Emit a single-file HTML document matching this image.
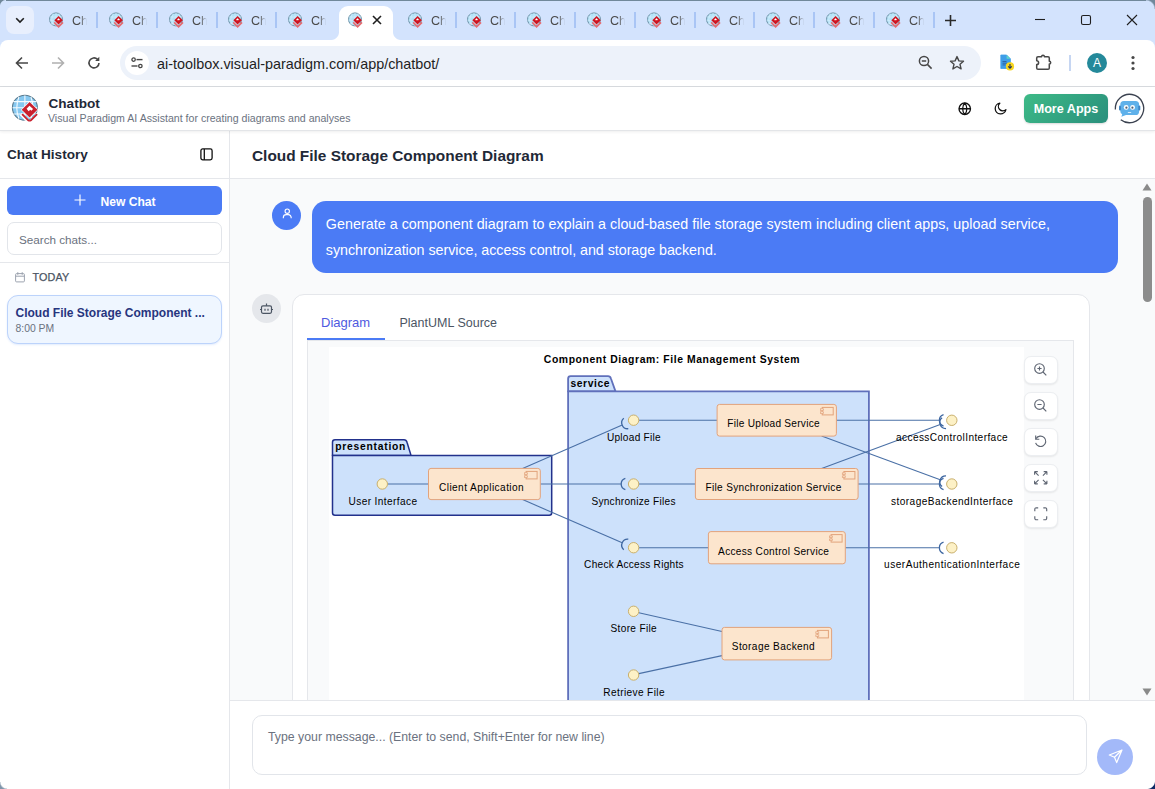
<!DOCTYPE html>
<html><head><meta charset="utf-8">
<style>
*{box-sizing:border-box;margin:0;padding:0}
html,body{width:1155px;height:789px;overflow:hidden;background:#fff;font-family:"Liberation Sans",sans-serif}
.a{position:absolute}
svg{display:block;position:absolute;overflow:visible}
.tabt{position:absolute;top:14.5px;font-size:12.6px;color:#4a4a4a;white-space:nowrap;line-height:1}
.sep{position:absolute;top:12px;width:2px;height:16px;background:#a9c5f5}
.t{position:absolute;white-space:nowrap;line-height:1}
</style></head><body>
<svg width="0" height="0" style="position:absolute">
 <defs>
  <symbol id="vp" viewBox="11.3 93.6 27.6 27.6">
   <circle cx="25.2" cy="107.4" r="12.5" fill="#86c8f0" stroke="#5b7b8e" stroke-width="1.1"/>
   <path d="M13.5 101.2h23.4M12.8 107.4h24.8M13.5 113.6h23.4M25.2 95v25M19.2 96.5q-4.2 10.9 0 21.8M31.2 96.5q4.2 10.9 0 21.8" stroke="#f4fbff" stroke-width="1.1" fill="none"/>
   <path d="M21.2 113.6L30 122.2 38.6 113.6" fill="none" stroke="#fff" stroke-width="3.4"/>
   <path d="M29.9 100.6L38.6 109.3 29.9 118 21.2 109.3z" fill="#fff"/>
   <path d="M29.9 101.6L37.8 109.4 29.9 117.2 22 109.4z" fill="#c9202e"/>
   <path d="M22.4 113.8L29.9 121.2 37.4 113.8" fill="none" stroke="#c9202e" stroke-width="1.9"/>
   <path d="M26.9 108.3L29.8 105.3 33.4 108.7 31.7 110.4 30.6 109.3 28.9 110.9z" fill="#fff"/>
  </symbol>
<symbol id="vpf" viewBox="0 0 16 16">
   <circle cx="8" cy="7.4" r="6.5" fill="#b3e1f7" stroke="#6f93a8" stroke-width="1"/>
   <path d="M2 5h12M1.6 8.4h12.8M3 11.6h10M8 1v13M5 1.8q-2.6 5.6 0 11.2M11 1.8q2.6 5.6 0 11.2" stroke="#d6f0fb" stroke-width="0.6" fill="none"/>
   <path d="M6.2 10.4L10.6 14.8 15 10.4" fill="none" stroke="#e66a70" stroke-width="1.6"/>
   <path d="M10.6 3.9L14.9 8.2 10.6 12.5 6.3 8.2z" fill="#cf1520"/>
   <path d="M9.2 7.6L10.5 6.2 11.9 7.6 11 8.5 10.4 8 9.8 8.6z" fill="#fff"/>
  </symbol>
 </defs>
</svg>
<!-- tab strip -->
<div class="a" style="left:0;top:0;width:1155px;height:50px;background:#d3e3fd"></div>
<div class="a" style="left:0;top:0;width:1155px;height:1px;background:#70889a"></div>
<div class="a" style="left:0;top:0;width:6px;height:6px;background:radial-gradient(circle at 6px 6px,#d3e3fd 5.5px,#70889a 6.5px)"></div>
<div class="a" style="left:1146px;top:0;width:9px;height:9px;background:radial-gradient(circle at 0px 9px,#d3e3fd 8px,#70889a 9.5px)"></div>
<div class="a" style="left:6px;top:6px;width:28px;height:28px;border-radius:8px;background:#e8effd"></div>
<svg style="left:14px;top:13.6px" width="12" height="12" viewBox="0 0 12 12"><path d="M2.2 4.2L6 8l3.8-3.8" fill="none" stroke="#1f1f1f" stroke-width="1.6"/></svg>
<svg style="left:48.0px;top:12px" width="16" height="16"><use href="#vpf"/></svg>
<div class="tabt" style="left:72px;width:15px;overflow:hidden;-webkit-mask-image:linear-gradient(90deg,#000 55%,transparent 100%);mask-image:linear-gradient(90deg,#000 55%,transparent 100%)">Chat</div>
<div class="sep" style="left:96px"></div>
<svg style="left:108.0px;top:12px" width="16" height="16"><use href="#vpf"/></svg>
<div class="tabt" style="left:132px;width:15px;overflow:hidden;-webkit-mask-image:linear-gradient(90deg,#000 55%,transparent 100%);mask-image:linear-gradient(90deg,#000 55%,transparent 100%)">Chat</div>
<div class="sep" style="left:156px"></div>
<svg style="left:168.0px;top:12px" width="16" height="16"><use href="#vpf"/></svg>
<div class="tabt" style="left:192px;width:15px;overflow:hidden;-webkit-mask-image:linear-gradient(90deg,#000 55%,transparent 100%);mask-image:linear-gradient(90deg,#000 55%,transparent 100%)">Chat</div>
<div class="sep" style="left:216px"></div>
<svg style="left:227.0px;top:12px" width="16" height="16"><use href="#vpf"/></svg>
<div class="tabt" style="left:251px;width:15px;overflow:hidden;-webkit-mask-image:linear-gradient(90deg,#000 55%,transparent 100%);mask-image:linear-gradient(90deg,#000 55%,transparent 100%)">Chat</div>
<div class="sep" style="left:275px"></div>
<svg style="left:287.0px;top:12px" width="16" height="16"><use href="#vpf"/></svg>
<div class="tabt" style="left:311px;width:15px;overflow:hidden;-webkit-mask-image:linear-gradient(90deg,#000 55%,transparent 100%);mask-image:linear-gradient(90deg,#000 55%,transparent 100%)">Chat</div>
<div class="a" style="left:339px;top:6px;width:54px;height:35px;background:#fff;border-radius:9px 9px 0 0"></div>
<div class="a" style="left:331px;top:32px;width:8px;height:8px;background:radial-gradient(circle at 0 0,#d3e3fd 7.5px,#fff 8.5px)"></div>
<div class="a" style="left:393px;top:32px;width:8px;height:8px;background:radial-gradient(circle at 8px 0,#d3e3fd 7.5px,#fff 8.5px)"></div>
<svg style="left:347.0px;top:12px" width="16" height="16"><use href="#vpf"/></svg>
<svg style="left:372px;top:15px" width="10" height="10" viewBox="0 0 10 10"><path d="M1 1L9 9M9 1L1 9" stroke="#1f1f1f" stroke-width="1.6"/></svg>
<svg style="left:407.0px;top:12px" width="16" height="16"><use href="#vpf"/></svg>
<div class="tabt" style="left:431px;width:15px;overflow:hidden;-webkit-mask-image:linear-gradient(90deg,#000 55%,transparent 100%);mask-image:linear-gradient(90deg,#000 55%,transparent 100%)">Chat</div>
<div class="sep" style="left:455px"></div>
<svg style="left:466.0px;top:12px" width="16" height="16"><use href="#vpf"/></svg>
<div class="tabt" style="left:490px;width:15px;overflow:hidden;-webkit-mask-image:linear-gradient(90deg,#000 55%,transparent 100%);mask-image:linear-gradient(90deg,#000 55%,transparent 100%)">Chat</div>
<div class="sep" style="left:514px"></div>
<svg style="left:526.0px;top:12px" width="16" height="16"><use href="#vpf"/></svg>
<div class="tabt" style="left:550px;width:15px;overflow:hidden;-webkit-mask-image:linear-gradient(90deg,#000 55%,transparent 100%);mask-image:linear-gradient(90deg,#000 55%,transparent 100%)">Chat</div>
<div class="sep" style="left:574px"></div>
<svg style="left:586.0px;top:12px" width="16" height="16"><use href="#vpf"/></svg>
<div class="tabt" style="left:610px;width:15px;overflow:hidden;-webkit-mask-image:linear-gradient(90deg,#000 55%,transparent 100%);mask-image:linear-gradient(90deg,#000 55%,transparent 100%)">Chat</div>
<div class="sep" style="left:634px"></div>
<svg style="left:646.0px;top:12px" width="16" height="16"><use href="#vpf"/></svg>
<div class="tabt" style="left:670px;width:15px;overflow:hidden;-webkit-mask-image:linear-gradient(90deg,#000 55%,transparent 100%);mask-image:linear-gradient(90deg,#000 55%,transparent 100%)">Chat</div>
<div class="sep" style="left:694px"></div>
<svg style="left:705.0px;top:12px" width="16" height="16"><use href="#vpf"/></svg>
<div class="tabt" style="left:729px;width:15px;overflow:hidden;-webkit-mask-image:linear-gradient(90deg,#000 55%,transparent 100%);mask-image:linear-gradient(90deg,#000 55%,transparent 100%)">Chat</div>
<div class="sep" style="left:753px"></div>
<svg style="left:765.0px;top:12px" width="16" height="16"><use href="#vpf"/></svg>
<div class="tabt" style="left:789px;width:15px;overflow:hidden;-webkit-mask-image:linear-gradient(90deg,#000 55%,transparent 100%);mask-image:linear-gradient(90deg,#000 55%,transparent 100%)">Chat</div>
<div class="sep" style="left:813px"></div>
<svg style="left:825.0px;top:12px" width="16" height="16"><use href="#vpf"/></svg>
<div class="tabt" style="left:849px;width:15px;overflow:hidden;-webkit-mask-image:linear-gradient(90deg,#000 55%,transparent 100%);mask-image:linear-gradient(90deg,#000 55%,transparent 100%)">Chat</div>
<div class="sep" style="left:873px"></div>
<svg style="left:885.0px;top:12px" width="16" height="16"><use href="#vpf"/></svg>
<div class="tabt" style="left:909px;width:15px;overflow:hidden;-webkit-mask-image:linear-gradient(90deg,#000 55%,transparent 100%);mask-image:linear-gradient(90deg,#000 55%,transparent 100%)">Chat</div>
<div class="sep" style="left:933px"></div>

<svg style="left:944.5px;top:14.5px" width="11" height="11" viewBox="0 0 11 11"><path d="M5.5 0v11M0 5.5h11" stroke="#2a2a2a" stroke-width="1.6"/></svg>



<svg style="left:1020px;top:0" width="135" height="40" viewBox="1020 0 135 40"><path d="M1035 19.5h10" stroke="#1f1f1f" stroke-width="1.1"/><rect x="1081.5" y="15.5" width="9" height="9" rx="1.6" fill="none" stroke="#1f1f1f" stroke-width="1.1"/><path d="M1127 15L1137 25M1137 15L1127 25" stroke="#1f1f1f" stroke-width="1.1"/></svg>
<!-- toolbar -->
<div class="a" style="left:0;top:40px;width:1155px;height:46px;background:#fff;border-radius:8px 8px 0 0"></div>
<div class="a" style="left:0;top:86px;width:1155px;height:1px;background:#d9dce0"></div>
<svg style="left:15px;top:56px" width="14" height="14" viewBox="0 0 14 14"><path d="M13 7H2M7 1.5L1.5 7 7 12.5" fill="none" stroke="#474747" stroke-width="1.6"/></svg>
<svg style="left:51px;top:56px" width="14" height="14" viewBox="0 0 14 14"><path d="M1 7h11M7 1.5L12.5 7 7 12.5" fill="none" stroke="#b0b0b0" stroke-width="1.6"/></svg>
<svg style="left:87px;top:56px" width="14" height="14" viewBox="0 0 14 14"><path d="M12 7A5 5 0 1 1 10.5 3.3" fill="none" stroke="#474747" stroke-width="1.6"/><path d="M12.3 0.8v4.2H8.1z" fill="#474747"/></svg>
<div class="a" style="left:120px;top:46px;width:861px;height:34px;border-radius:17px;background:#edf2fa"></div>
<div class="a" style="left:125px;top:51px;width:24px;height:24px;border-radius:12px;background:#fff"></div>
<svg style="left:131px;top:57px" width="12" height="12" viewBox="0 0 12 12"><circle cx="2.6" cy="2.6" r="1.7" fill="none" stroke="#474747" stroke-width="1.3"/><path d="M5.5 2.6h6" stroke="#474747" stroke-width="1.4"/><circle cx="9.4" cy="9" r="1.7" fill="none" stroke="#474747" stroke-width="1.3"/><path d="M0.5 9h6" stroke="#474747" stroke-width="1.4"/></svg>
<div class="t" style="left:157px;top:57px;font-size:14.4px;color:#1f1f1f">ai-toolbox.visual-paradigm.com/app/chatbot/</div>
<svg style="left:917.5px;top:55px" width="15" height="15" viewBox="0 0 15 15"><circle cx="6" cy="6" r="4.6" fill="none" stroke="#474747" stroke-width="1.5"/><path d="M3.8 6h4.4M9.4 9.4l4.2 4.2" stroke="#474747" stroke-width="1.5"/></svg>
<svg style="left:949px;top:55px" width="16" height="16" viewBox="0 0 16 16"><path d="M8 1.6l1.9 4.3 4.6.4-3.5 3 1.1 4.6L8 11.5l-4.1 2.4 1.1-4.6-3.5-3 4.6-.4z" fill="none" stroke="#474747" stroke-width="1.4" stroke-linejoin="round"/></svg>
<svg style="left:998px;top:53px" width="18" height="18" viewBox="0 0 18 18"><path d="M2.8 2h5.8l3.8 3.8V15.5H2.8z" fill="#3f9ee8" stroke="#3f9ee8" stroke-width="0.8" stroke-linejoin="round"/><path d="M8.6 2v3.8h3.8z" fill="#5fd6c9"/><path d="M4.5 8.5h4M4.5 10.2h4.5M4.5 11.9h3" stroke="#2b5f9e" stroke-width="0.9"/><circle cx="12" cy="13.4" r="4.1" fill="#f7d51d"/><path d="M12 10.9v4.4M10.2 13.4l1.8 1.9 1.8-1.9" fill="none" stroke="#1d2e5a" stroke-width="1.1"/></svg>
<svg style="left:1035px;top:53px" width="17" height="17" viewBox="0 0 17 17"><path d="M3 3.7H6.6A1.4 1.4 0 0 1 9.4 3.7H13Q14.3 3.7 14.3 5V8.3A1.4 1.4 0 0 1 14.3 11.1V14.9Q14.3 16.2 13 16.2H3Q1.7 16.2 1.7 14.9V11.6A1.9 1.9 0 0 0 1.7 7.8V5Q1.7 3.7 3 3.7Z" fill="none" stroke="#474747" stroke-width="1.5" stroke-linejoin="round"/></svg>
<div class="a" style="left:1069px;top:55px;width:2px;height:16px;background:#c6d6f2"></div>
<div class="a" style="left:1087px;top:53px;width:20px;height:20px;border-radius:10px;background:#24899a"></div>
<div class="t" style="left:1087px;top:57px;width:20px;text-align:center;font-size:12px;color:#fff">A</div>
<svg style="left:1130px;top:55px" width="6" height="16" viewBox="0 0 6 16"><circle cx="3" cy="2.5" r="1.6" fill="#474747"/><circle cx="3" cy="8" r="1.6" fill="#474747"/><circle cx="3" cy="13.5" r="1.6" fill="#474747"/></svg>
<!-- app header -->
<div class="a" style="left:0;top:87px;width:1155px;height:44px;background:#fff;border-bottom:1px solid #e3e5e8;box-shadow:0 1px 3px rgba(0,0,0,0.07);z-index:2"></div>
<div class="a" style="left:0;top:87px;width:1155px;height:44px;z-index:3">
 <svg style="left:11.3px;top:6.6px" width="27.6" height="27.6"><use href="#vp"/></svg>
 <div class="t" style="left:48.5px;top:10px;font-size:13.6px;font-weight:700;color:#1f2937">Chatbot</div>
 <div class="t" style="left:48px;top:26px;font-size:10.6px;color:#6b7280">Visual Paradigm AI Assistant for creating diagrams and analyses</div>
 <svg style="left:957.5px;top:14.5px" width="13.5" height="13.5" viewBox="0 0 16 16"><circle cx="8" cy="8" r="6.8" fill="none" stroke="#111" stroke-width="1.6"/><path d="M1.2 8h13.6M8 1.2c-3.3 3.7-3.3 9.9 0 13.6M8 1.2c3.3 3.7 3.3 9.9 0 13.6" fill="none" stroke="#111" stroke-width="1.5"/></svg>
 <svg style="left:993.5px;top:15px" width="13" height="13" viewBox="0 0 13 13"><path d="M5.8 1.2A5.4 5.4 0 1 0 11.9 7.6 4.1 4.1 0 0 1 5.8 1.2z" fill="none" stroke="#111" stroke-width="1.3" stroke-linejoin="round"/></svg>
 <div class="a" style="left:1024px;top:7px;width:84px;height:29px;border-radius:6px;background:linear-gradient(135deg,#3dba87,#2a8f7c);box-shadow:0 1px 2px rgba(0,0,0,0.15)"></div>
 <div class="t" style="left:1024px;top:16px;width:84px;text-align:center;font-size:12.6px;font-weight:700;color:#fff">More Apps</div>
 <svg style="left:0;top:-87px" width="1155" height="130" viewBox="0 0 1155 130"><path d="M1115.33 109.49A14.2 14.2 0 1 1 1120.76 119.69" fill="none" stroke="#3b4250" stroke-width="1.3"/><path d="M1124 101h11.5a3.6 3.6 0 0 1 3.6 3.6v6.8a3.6 3.6 0 0 1-3.6 3.6h-9.5l-4.6 1.8 0.8-2.6a3.6 3.6 0 0 1-1.9-3.2v-6.4a3.6 3.6 0 0 1 3.7-3.6z" fill="#5fb1ea"/><rect x="1119" y="105.5" width="2" height="5" rx="1" fill="#3f86c4"/><rect x="1138.3" y="105.5" width="2" height="5" rx="1" fill="#3f86c4"/><circle cx="1126.2" cy="107.4" r="2.4" fill="#fff"/><circle cx="1132.6" cy="107.4" r="2.4" fill="#fff"/><circle cx="1126.4" cy="107.7" r="1.1" fill="#4f5f73"/><circle cx="1132.4" cy="107.7" r="1.1" fill="#4f5f73"/><path d="M1128.3 112.5h2.4" stroke="#d8efff" stroke-width="1.1" stroke-linecap="round"/></svg>
</div>
<!-- sidebar -->
<div class="a" style="left:0;top:131px;width:230px;height:658px;background:#fff;border-right:1px solid #e5e7eb"></div>
<div class="t" style="left:7px;top:148px;font-size:13.6px;font-weight:700;color:#1f2937">Chat History</div>
<svg style="left:200px;top:148px" width="13" height="13" viewBox="0 0 13 13"><rect x="0.9" y="0.9" width="11.2" height="11" rx="1.8" fill="none" stroke="#111" stroke-width="1.3"/><path d="M4.3 0.9v11" stroke="#111" stroke-width="1.3"/></svg>
<div class="a" style="left:0;top:178px;width:229px;height:1px;background:#e5e7eb"></div>
<div class="a" style="left:7px;top:186px;width:215px;height:29px;border-radius:6px;background:#4b7bf5"></div>
<svg style="left:74px;top:194px" width="12" height="12" viewBox="0 0 12 12"><path d="M6 0.5v11M0.5 6h11" stroke="#fff" stroke-width="1.15"/></svg>
<div class="t" style="left:100.5px;top:196px;font-size:12.1px;font-weight:700;color:#fff">New Chat</div>
<div class="a" style="left:7px;top:222px;width:215px;height:33px;border-radius:7px;background:#fff;border:1px solid #e2e5ea"></div>
<div class="t" style="left:19px;top:233.5px;font-size:11.7px;color:#6b7280">Search chats...</div>
<div class="a" style="left:0;top:262px;width:229px;height:1px;background:#e5e7eb"></div>
<svg style="left:14.5px;top:271.8px" width="10" height="10.5" viewBox="0 0 10 10.5"><rect x="0.6" y="1.6" width="8.8" height="8.3" rx="1" fill="none" stroke="#9ca3af" stroke-width="1"/><path d="M0.6 4.2h8.8M2.8 0.2v2.6M7.2 0.2v2.6" stroke="#9ca3af" stroke-width="1"/></svg>
<div class="t" style="left:32.5px;top:272px;font-size:10.8px;font-weight:400;color:#4b5563;letter-spacing:0.15px;-webkit-text-stroke:0.25px #4b5563">TODAY</div>
<div class="a" style="left:7px;top:295px;width:215px;height:49px;border-radius:11px;background:#eff6ff;border:1px solid #bcd3fb;box-shadow:0 1px 2px rgba(59,130,246,0.15)"></div>
<div class="t" style="left:15.5px;top:307px;font-size:12px;font-weight:700;color:#27357e">Cloud File Storage Component ...</div>
<div class="t" style="left:15.5px;top:324.3px;font-size:10.4px;color:#6b7280">8:00 PM</div>
<!-- main -->
<div class="a" style="left:230px;top:131px;width:925px;height:48px;background:#fff;border-bottom:1px solid #e5e7eb"></div>
<div class="t" style="left:252px;top:148px;font-size:15.4px;font-weight:700;color:#1f2937">Cloud File Storage Component Diagram</div>
<div class="a" style="left:230px;top:179px;width:925px;height:521px;background:#f9fafb;overflow:hidden" id="msgs">
</div>
<!-- user message -->
<div class="a" style="left:272px;top:201px;width:29px;height:29px;border-radius:50%;background:#4b7bf5"></div>
<svg style="left:280.8px;top:207.2px" width="12.5" height="12.5" viewBox="0 0 15 15"><circle cx="7.5" cy="5" r="2.6" fill="none" stroke="#fff" stroke-width="1.35"/><path d="M2.8 13.5v-0.8a3.5 3.5 0 0 1 3.5-3.5h2.4a3.5 3.5 0 0 1 3.5 3.5v0.8" fill="none" stroke="#fff" stroke-width="1.35"/></svg>
<div class="a" style="left:312px;top:201px;width:806px;height:72px;border-radius:14px;background:#4b7bf5"></div>
<div class="a" style="left:325.8px;top:211.2px;font-size:14.3px;line-height:26px;color:#fff;white-space:nowrap;letter-spacing:0.03px">Generate a component diagram to explain a cloud-based file storage system including client apps, upload service,</div><div class="a" style="left:325.8px;top:237.2px;font-size:14.3px;line-height:26px;color:#fff;white-space:nowrap;letter-spacing:-0.04px">synchronization service, access control, and storage backend.</div>
<!-- bot -->
<div class="a" style="left:252px;top:294px;width:29px;height:29px;border-radius:50%;background:#e5e7eb"></div>
<svg style="left:259px;top:301px" width="15" height="15" viewBox="0 0 15 15"><rect x="2.5" y="4.8" width="10" height="7.5" rx="1.5" fill="none" stroke="#4b5563" stroke-width="1.2"/><path d="M7.5 4.8V2.5M1 8.5h1.5M12.5 8.5H14M6 7.8v2M9 7.8v2" stroke="#4b5563" stroke-width="1.2"/></svg>
<div class="a" style="left:292px;top:294px;width:798px;height:500px;border-radius:12px;background:#fff;border:1px solid #e5e7eb"></div>
<div class="t" style="left:321px;top:316.3px;font-size:13px;color:#4f5ae0">Diagram</div>
<div class="t" style="left:399.5px;top:316.8px;font-size:12.5px;color:#4b5563">PlantUML Source</div>
<div class="a" style="left:307px;top:338px;width:78px;height:2px;background:#4b7bf5"></div>
<div class="a" style="left:307px;top:340px;width:767px;height:400px;background:#f9fafb;border:1px solid #e5e7eb"></div>
<div class="a" style="left:329px;top:347px;width:695px;height:400px;background:#fff"></div>
<svg style="left:329px;top:347px" width="695" height="353" viewBox="329 347 695 353"><style>.lb{font-family:"Liberation Sans",sans-serif;font-size:10.1px;fill:#000}.pk{font-family:"Liberation Sans",sans-serif;font-size:10.3px;font-weight:700;fill:#000}.tt{font-family:"Liberation Sans",sans-serif;font-size:10.4px;font-weight:700;fill:#000}</style><text x="543.8" y="362.9" textLength="255.8" class="tt">Component Diagram: File Management System</text><path d="M568.1 391.4V378.7Q568.1 376.2 570.6 376.2H608.0Q610.3 376.2 611.0 378.7L615.5 391.4H568.1z" fill="#cde1fb" stroke="#6070bb" stroke-width="1.8" stroke-linejoin="round"/><path d="M568.1 391.4H868.9V757.5Q868.9 760 866.4 760H570.6Q568.1 760 568.1 757.5z" fill="#cde1fb" stroke="#6070bb" stroke-width="1.8"/><text x="570.5" y="386.8" textLength="39.0" class="pk">service</text><path d="M332.5 455.4V442.3Q332.5 439.8 335.0 439.8H404.0Q406.3 439.8 407.0 442.3L411 455.4H332.5z" fill="#cde1fb" stroke="#22318c" stroke-width="1.5" stroke-linejoin="round"/><path d="M332.5 455.4H551.7V512.7Q551.7 515.2 549.2 515.2H335.0Q332.5 515.2 332.5 512.7z" fill="#cde1fb" stroke="#22318c" stroke-width="1.5"/><text x="335.20000000000005" y="450.2" textLength="70.2" class="pk">presentation</text><path d="M388.0 484.0L428.5 484.0" stroke="#4a70a6" stroke-width="1.1" fill="none"/><path d="M628.30 428.72A6 6 0 0 1 623.76 418.25" stroke="#3d66a0" stroke-width="1.3" fill="none"/><path d="M522.6 468.4L622.2 425.1" stroke="#4a70a6" stroke-width="1.1" fill="none"/><path d="M625.35 489.71A6 6 0 0 1 625.35 478.29" stroke="#3d66a0" stroke-width="1.3" fill="none"/><path d="M540.3 484.0L621.2 484.0" stroke="#4a70a6" stroke-width="1.1" fill="none"/><path d="M623.76 549.65A6 6 0 0 1 628.30 539.18" stroke="#3d66a0" stroke-width="1.3" fill="none"/><path d="M522.6 499.6L622.2 542.8" stroke="#4a70a6" stroke-width="1.1" fill="none"/><path d="M639.0 420.2L717.1 420.2" stroke="#4a70a6" stroke-width="1.1" fill="none"/><path d="M639.0 484.0L695.4 484.0" stroke="#4a70a6" stroke-width="1.1" fill="none"/><path d="M639.0 547.7L708.4 547.7" stroke="#4a70a6" stroke-width="1.1" fill="none"/><path d="M638.8 612.8L722.0 631.5" stroke="#4a70a6" stroke-width="1.1" fill="none"/><path d="M638.8 673.6L722.0 655.6" stroke="#4a70a6" stroke-width="1.1" fill="none"/><path d="M943.55 426.01A6 6 0 0 1 943.55 414.59" stroke="#3d66a0" stroke-width="1.3" fill="none"/><path d="M836.4 420.3L939.4 420.3" stroke="#4a70a6" stroke-width="1.1" fill="none"/><path d="M946.04 428.52A6 6 0 0 1 942.08 417.81" stroke="#3d66a0" stroke-width="1.3" fill="none"/><path d="M821.6 468.5L940.2 424.6" stroke="#4a70a6" stroke-width="1.1" fill="none"/><path d="M942.08 486.51A6 6 0 0 1 946.02 475.79" stroke="#3d66a0" stroke-width="1.3" fill="none"/><path d="M821.6 436.1L940.2 479.7" stroke="#4a70a6" stroke-width="1.1" fill="none"/><path d="M943.55 489.71A6 6 0 0 1 943.55 478.29" stroke="#3d66a0" stroke-width="1.3" fill="none"/><path d="M858.1 484.0L939.4 484.0" stroke="#4a70a6" stroke-width="1.1" fill="none"/><path d="M943.55 553.51A6 6 0 0 1 943.55 542.09" stroke="#3d66a0" stroke-width="1.3" fill="none"/><path d="M845.3 547.8L939.4 547.8" stroke="#4a70a6" stroke-width="1.1" fill="none"/><circle cx="382.3" cy="484" r="5.2" fill="#fdf1c6" stroke="#c9b06e" stroke-width="1"/><text x="348.5" y="505.2" textLength="68.6" class="lb">User Interface</text><circle cx="633.6" cy="420.2" r="5.2" fill="#fdf1c6" stroke="#c9b06e" stroke-width="1"/><text x="606.9" y="441.2" textLength="53.8" class="lb">Upload File</text><circle cx="633.6" cy="484" r="5.2" fill="#fdf1c6" stroke="#c9b06e" stroke-width="1"/><text x="591.4" y="505.2" textLength="84.1" class="lb">Synchronize Files</text><circle cx="633.6" cy="547.7" r="5.2" fill="#fdf1c6" stroke="#c9b06e" stroke-width="1"/><text x="584.1" y="568.1" textLength="99.4" class="lb">Check Access Rights</text><circle cx="633.6" cy="611.3" r="5.2" fill="#fdf1c6" stroke="#c9b06e" stroke-width="1"/><text x="610.5" y="632.0" textLength="46.2" class="lb">Store File</text><circle cx="633.6" cy="675" r="5.2" fill="#fdf1c6" stroke="#c9b06e" stroke-width="1"/><text x="603.3" y="696.1" textLength="61.2" class="lb">Retrieve File</text><circle cx="951.8" cy="420.3" r="5.2" fill="#fdf1c6" stroke="#c9b06e" stroke-width="1"/><text x="896.0" y="441.0" textLength="111.7" class="lb">accessControlInterface</text><circle cx="951.8" cy="484" r="5.2" fill="#fdf1c6" stroke="#c9b06e" stroke-width="1"/><text x="891.0" y="505.4" textLength="121.9" class="lb">storageBackendInterface</text><circle cx="951.8" cy="547.8" r="5.2" fill="#fdf1c6" stroke="#c9b06e" stroke-width="1"/><text x="884.1" y="568.1" textLength="135.7" class="lb">userAuthenticationInterface</text><rect x="428.5" y="468.4" width="111.8" height="31.2" rx="2.5" fill="#fce5cd" stroke="#e2a37c" stroke-width="1"/><rect x="526.1" y="471.4" width="11" height="7.5" fill="#fce5cd" stroke="#e2a37c" stroke-width="1"/><rect x="524.5" y="472.8" width="3" height="1.6" fill="#fce5cd" stroke="#e2a37c" stroke-width="0.7"/><rect x="524.5" y="475.8" width="3" height="1.6" fill="#fce5cd" stroke="#e2a37c" stroke-width="0.7"/><text x="439.0" y="491.1" textLength="84.7" class="lb">Client Application</text><rect x="717.1" y="404.4" width="119.3" height="31.7" rx="2.5" fill="#fce5cd" stroke="#e2a37c" stroke-width="1"/><rect x="822.2" y="407.4" width="11" height="7.5" fill="#fce5cd" stroke="#e2a37c" stroke-width="1"/><rect x="820.6" y="408.8" width="3" height="1.6" fill="#fce5cd" stroke="#e2a37c" stroke-width="0.7"/><rect x="820.6" y="411.8" width="3" height="1.6" fill="#fce5cd" stroke="#e2a37c" stroke-width="0.7"/><text x="727.3" y="427.0" textLength="92.3" class="lb">File Upload Service</text><rect x="695.4" y="468.5" width="162.7" height="31.0" rx="2.5" fill="#fce5cd" stroke="#e2a37c" stroke-width="1"/><rect x="843.9" y="471.5" width="11" height="7.5" fill="#fce5cd" stroke="#e2a37c" stroke-width="1"/><rect x="842.3" y="472.9" width="3" height="1.6" fill="#fce5cd" stroke="#e2a37c" stroke-width="0.7"/><rect x="842.3" y="475.9" width="3" height="1.6" fill="#fce5cd" stroke="#e2a37c" stroke-width="0.7"/><text x="705.5" y="491.1" textLength="135.8" class="lb">File Synchronization Service</text><rect x="708.4" y="531.6" width="136.9" height="32.2" rx="2.5" fill="#fce5cd" stroke="#e2a37c" stroke-width="1"/><rect x="831.1" y="534.6" width="11" height="7.5" fill="#fce5cd" stroke="#e2a37c" stroke-width="1"/><rect x="829.5" y="536.0" width="3" height="1.6" fill="#fce5cd" stroke="#e2a37c" stroke-width="0.7"/><rect x="829.5" y="539.0" width="3" height="1.6" fill="#fce5cd" stroke="#e2a37c" stroke-width="0.7"/><text x="718.1" y="555.1" textLength="110.8" class="lb">Access Control Service</text><rect x="722" y="627.4" width="109.6" height="32.5" rx="2.5" fill="#fce5cd" stroke="#e2a37c" stroke-width="1"/><rect x="817.4" y="630.4" width="11" height="7.5" fill="#fce5cd" stroke="#e2a37c" stroke-width="1"/><rect x="815.8" y="631.8" width="3" height="1.6" fill="#fce5cd" stroke="#e2a37c" stroke-width="0.7"/><rect x="815.8" y="634.8" width="3" height="1.6" fill="#fce5cd" stroke="#e2a37c" stroke-width="0.7"/><text x="731.8" y="650.1" textLength="82.9" class="lb">Storage Backend</text></svg>

<!-- zoom controls -->
<div class="a" style="left:1024px;top:356px;width:34px;height:28px;border-radius:7px;background:#fff;border:1px solid #eceef1;box-shadow:0 1px 2px rgba(0,0,0,0.08)"></div>
<svg style="left:1033.2px;top:362.2px" width="15.5" height="15.5" viewBox="0 0 15.5 15.5"><circle cx="6.5" cy="6.5" r="4.8" fill="none" stroke="#5f6673" stroke-width="1.15"/><path d="M10 10l3.3 3.3M4.4 6.5h4.2M6.5 4.4v4.2" stroke="#5f6673" stroke-width="1.15"/></svg>
<div class="a" style="left:1024px;top:392px;width:34px;height:28px;border-radius:7px;background:#fff;border:1px solid #eceef1;box-shadow:0 1px 2px rgba(0,0,0,0.08)"></div>
<svg style="left:1033.2px;top:398.2px" width="15.5" height="15.5" viewBox="0 0 15.5 15.5"><circle cx="6.5" cy="6.5" r="4.8" fill="none" stroke="#5f6673" stroke-width="1.15"/><path d="M10 10l3.3 3.3M4.4 6.5h4.2" stroke="#5f6673" stroke-width="1.15"/></svg>
<div class="a" style="left:1024px;top:428px;width:34px;height:28px;border-radius:7px;background:#fff;border:1px solid #eceef1;box-shadow:0 1px 2px rgba(0,0,0,0.08)"></div>
<svg style="left:1033.2px;top:434.2px" width="15.5" height="15.5" viewBox="0 0 15.5 15.5"><path d="M3.1 4.6A5.2 5.2 0 1 1 2.6 8.8" fill="none" stroke="#5f6673" stroke-width="1.15"/><path d="M2.7 1.6v3.6h3.6" fill="none" stroke="#5f6673" stroke-width="1.15"/></svg>
<div class="a" style="left:1024px;top:464px;width:34px;height:28px;border-radius:7px;background:#fff;border:1px solid #eceef1;box-shadow:0 1px 2px rgba(0,0,0,0.08)"></div>
<svg style="left:1033.2px;top:470.2px" width="15.5" height="15.5" viewBox="0 0 15.5 15.5"><path d="M1.6 1.6l4 4M1.6 1.6h3.2M1.6 1.6v3.2M13.9 1.6l-4 4M13.9 1.6h-3.2M13.9 1.6v3.2M1.6 13.9l4-4M1.6 13.9h3.2M1.6 13.9v-3.2M13.9 13.9l-4-4M13.9 13.9h-3.2M13.9 13.9v-3.2" fill="none" stroke="#5f6673" stroke-width="1.1"/></svg>
<div class="a" style="left:1024px;top:500px;width:34px;height:28px;border-radius:7px;background:#fff;border:1px solid #eceef1;box-shadow:0 1px 2px rgba(0,0,0,0.08)"></div>
<svg style="left:1033.2px;top:506.2px" width="15.5" height="15.5" viewBox="0 0 15.5 15.5"><path d="M1.8 5.2V3.2a1.4 1.4 0 0 1 1.4-1.4h2M10.3 1.8h2a1.4 1.4 0 0 1 1.4 1.4v2M13.7 10.3v2a1.4 1.4 0 0 1-1.4 1.4h-2M5.2 13.7h-2a1.4 1.4 0 0 1-1.4-1.4v-2" fill="none" stroke="#5f6673" stroke-width="1.15"/></svg>
<!-- scrollbar -->

<svg style="left:1142px;top:183px" width="10" height="8" viewBox="0 0 10 8"><path d="M5 0.5L9.5 7.5H0.5z" fill="#8a8a8a"/></svg>
<div class="a" style="left:1143px;top:197px;width:9px;height:105px;border-radius:4.5px;background:#8c8c8c"></div>
<svg style="left:1142px;top:688px" width="10" height="8" viewBox="0 0 10 8"><path d="M0.5 0.5H9.5L5 7.5z" fill="#8a8a8a"/></svg>
<!-- input area -->
<div class="a" style="left:230px;top:700px;width:925px;height:89px;background:#fff;border-top:1px solid #e5e7eb"></div>
<div class="a" style="left:252px;top:715px;width:835px;height:60px;border-radius:10px;background:#fff;border:1px solid #e2e5ea"></div>
<div class="t" style="left:268px;top:731px;font-size:12.3px;color:#6b7280">Type your message... (Enter to send, Shift+Enter for new line)</div>
<div class="a" style="left:1097px;top:739px;width:36px;height:36px;border-radius:18px;background:#a3b9f9"></div>
<svg style="left:1108px;top:749px" width="15" height="15" viewBox="0 0 15 15"><path d="M14 1L1.3 6l5.2 2.2L8.7 13.6z M14 1L6.5 8.2" fill="none" stroke="#fff" stroke-width="1.2" stroke-linejoin="round"/></svg>
<div class="a" style="left:1147px;top:781px;width:8px;height:8px;background:radial-gradient(circle at 0 0,transparent 7.5px,#0e2a66 8.5px)"></div>
<div class="a" style="left:0;top:782px;width:7px;height:7px;background:radial-gradient(circle at 7px 0,transparent 6px,#8096ab 7.5px)"></div>

</body></html>
